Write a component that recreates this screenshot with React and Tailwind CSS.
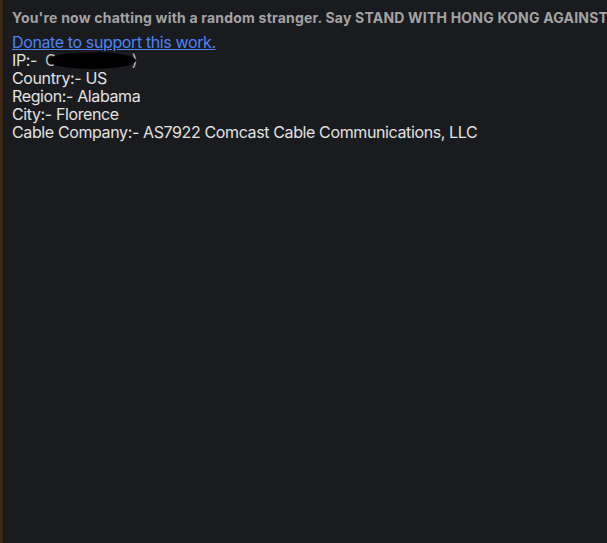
import React from 'react';

const INFO = [
  ['Country:-', 'US'],
  ['Region:-', 'Alabama'],
  ['City:-', 'Florence'],
  ['Cable Company:-', 'AS7922 Comcast Cable Communications, LLC'],
];

const App = () => {
  return (
    <div className="flex h-[543px] w-[607px] overflow-hidden bg-[#1a1b1e] font-['Inter',sans-serif]">
      {/* left window edge */}
      <div className="w-[3px] shrink-0 bg-[#3b2916]" />
      <div className="w-px shrink-0 bg-[#121314]" />
      <div className="min-w-0 flex-1 overflow-hidden pl-2 pt-[9px]">
        <p className="whitespace-nowrap text-[14px] font-bold leading-[17px] tracking-[0.2px] text-[#a3a3a3]">
          You're now chatting with a random stranger. Say STAND WITH HONG KONG AGAINST CCP CHINA!
        </p>
        <div className="mt-[7px] text-[16px] leading-[18px] tracking-[-0.38px] text-[#e2e2e2]">
          <a href="#" className="text-[#4d84f5] underline">Donate to support this work.</a>
          <div className="flex items-center">
            <span>IP:-&nbsp;</span>
            {/* redacted address */}
            <span className="relative ml-[4px] inline-block h-[18px] w-[94px] text-[#bdbdbd]">
              <span className="absolute left-0 top-0">C</span>
              <span className="absolute right-[2px] top-0">)</span>
              <span className="absolute left-[3px] top-[1px] h-[17px] w-[88px] rounded-[50%] bg-black" />
            </span>
          </div>
          {INFO.map(([label, value]) => (
            <div key={label}>
              {label} {value}
            </div>
          ))}
        </div>
      </div>
    </div>
  );
};

export default App;
